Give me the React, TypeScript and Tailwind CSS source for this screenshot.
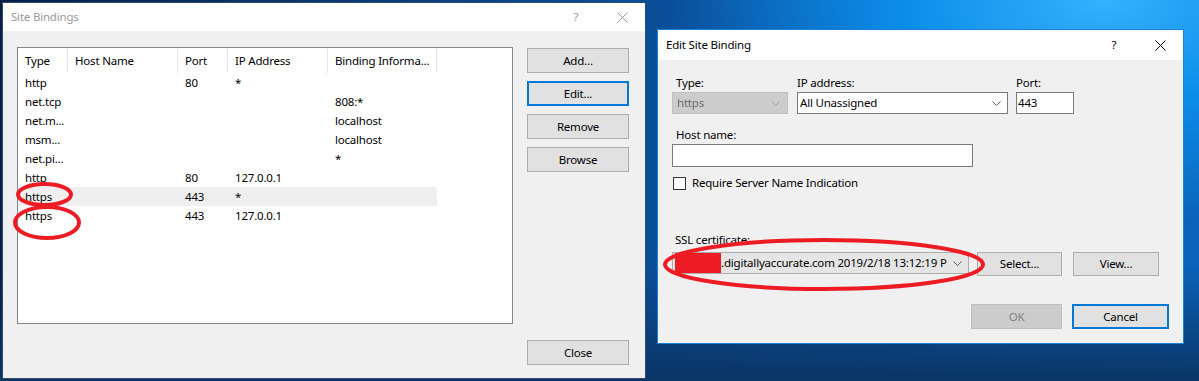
import React from 'react';

type Row = [string, string, string, string, string];

const rows: Row[] = [
    ['http', '', '80', '*', ''],
    ['net.tcp', '', '', '', '808:*'],
    ['net.m...', '', '', '', 'localhost'],
    ['msm...', '', '', '', 'localhost'],
    ['net.pi...', '', '', '', '*'],
    ['http', '', '80', '127.0.0.1', ''],
    ['https', '', '443', '*', ''],
    ['https', '', '443', '127.0.0.1', ''],
];

const columns = ['Type', 'Host Name', 'Port', 'IP Address', 'Binding Informa...'];
const colWidths = ['w-[50px]', 'w-[110px]', 'w-[50px]', 'w-[100px]', 'w-[109px]'];

const Chevron = ({ color }: { color: string }) => (
    <svg width="9" height="5" viewBox="0 0 9 5" fill="none">
        <polyline points="0.5,0.5 4.5,4.5 8.5,0.5" stroke={color} strokeWidth="1" />
    </svg>
);

const CloseGlyph = ({ color }: { color: string }) => (
    <svg width="11" height="11" viewBox="0 0 11 11" fill="none">
        <line x1="0.5" y1="0.5" x2="10.5" y2="10.5" stroke={color} strokeWidth="1" />
        <line x1="10.5" y1="0.5" x2="0.5" y2="10.5" stroke={color} strokeWidth="1" />
    </svg>
);

const TitleBar = ({ title, active, height }: { title: string; active: boolean; height: string }) => (
    <div className={`flex items-center bg-white ${height}`}>
        <span className={`pl-[8px] ${active ? 'text-black' : 'text-[#999999]'}`}>{title}</span>
        <div className="ml-auto flex h-full">
            <div className={`flex w-[46px] items-center justify-center ${active ? 'text-black' : 'text-[#999999]'}`}>?</div>
            <div className="flex w-[46px] items-center justify-center">
                <CloseGlyph color={active ? '#000000' : '#999999'} />
            </div>
        </div>
    </div>
);

const Button = ({
    label,
    width,
    height = 'h-[25px]',
    isDefault,
    disabled,
}: {
    label: string;
    width: string;
    height?: string;
    isDefault?: boolean;
    disabled?: boolean;
}) => {
    const look = disabled
        ? 'border border-[#bfbfbf] bg-[#cccccc] text-[#838383]'
        : isDefault
          ? 'border-2 border-[#0078d7] bg-[#e1e1e1] text-black'
          : 'border border-[#adadad] bg-[#e1e1e1] text-black';
    return <div className={`flex shrink-0 items-center justify-center ${width} ${height} ${look}`}>{label}</div>;
};

const SiteBindings = () => (
    <div className="absolute left-[2px] top-[2px] flex h-[377px] w-[644px] flex-col border border-[#2e4a6e] bg-[#f0f0f0]">
        <TitleBar title="Site Bindings" active={false} height="h-[28px]" />
        <div className="flex flex-col pl-[14px] pr-[16px] pt-[16px]">
            <div className="flex gap-[14px]">
                {/* bindings list */}
                <div className="h-[277px] w-[496px] border border-[#828790] bg-white">
                    <div className="flex h-[25px]">
                        {columns.map((c, i) => (
                            <div
                                key={c}
                                className={`flex items-center whitespace-nowrap border-r border-[#e5e5e5] pl-[7px] ${colWidths[i]}`}
                            >
                                {c}
                            </div>
                        ))}
                    </div>
                    {rows.map((r, idx) => (
                        <div key={idx} className={`flex h-[19px] w-[419px] ${idx === 6 ? 'bg-[#efefef]' : ''}`}>
                            {r.map((cell, i) => (
                                <div key={i} className={`flex items-center whitespace-nowrap pl-[7px] ${colWidths[i]}`}>
                                    {cell}
                                </div>
                            ))}
                        </div>
                    ))}
                </div>
                <div className="flex flex-col gap-[8px] pt-[1px]">
                    <Button label="Add..." width="w-[102px]" />
                    <Button label="Edit..." width="w-[102px]" isDefault />
                    <Button label="Remove" width="w-[102px]" />
                    <Button label="Browse" width="w-[102px]" />
                </div>
            </div>
            <div className="mt-[16px] flex justify-end">
                <Button label="Close" width="w-[102px]" />
            </div>
        </div>
    </div>
);

const EditBinding = () => (
    <div className="absolute left-[657px] top-[29px] flex h-[315px] w-[527px] flex-col border border-[#1883d7] bg-[#f0f0f0]">
        <TitleBar title="Edit Site Binding" active height="h-[30px]" />
        <div className="flex flex-col pl-[14px] pr-[14px] pt-[15px]">
            <div className="flex">
                <div className="flex w-[116px] flex-col">
                    <span className="h-[16px] pl-[4px] leading-[16px]">Type:</span>
                    <div className="mt-[1px] flex h-[22px] items-center border border-[#bfbfbf] bg-[#cccccc] pl-[4px] pr-[7px] text-[#6d6d6d]">
                        https
                        <span className="ml-auto flex">
                            <Chevron color="#a0a0a0" />
                        </span>
                    </div>
                </div>
                <div className="ml-[9px] flex w-[211px] flex-col">
                    <span className="h-[16px] leading-[16px]">IP address:</span>
                    <div className="mt-[1px] flex h-[22px] items-center border border-[#7a7a7a] bg-white pl-[2px] pr-[6px]">
                        All Unassigned
                        <span className="ml-auto flex">
                            <Chevron color="#606060" />
                        </span>
                    </div>
                </div>
                <div className="ml-[8px] flex w-[58px] flex-col">
                    <span className="h-[16px] leading-[16px]">Port:</span>
                    <div className="mt-[1px] flex h-[22px] items-center border border-[#7a7a7a] bg-white pl-[1px]">443</div>
                </div>
            </div>

            <span className="mt-[13px] h-[16px] pl-[4px] leading-[16px]">Host name:</span>
            <div className="mt-[1px] h-[23px] w-[301px] border border-[#7a7a7a] bg-white" />

            <div className="mt-[8px] flex h-[16px] items-center gap-[6px] pl-[1px]">
                <div className="h-[13px] w-[13px] border border-[#333333] bg-white" />
                <span className="leading-[16px]">Require Server Name Indication</span>
            </div>

            <span className="mt-[41px] h-[16px] pl-[3px] leading-[16px]">SSL certificate:</span>
            <div className="mt-[4px] flex items-start">
                <div className="flex h-[22px] w-[297px] items-center border border-[#adadad] bg-[#e5e5e5] pl-[2px]">
                    <div className="h-[20px] w-[46px] shrink-0 bg-[#ed1c24]" />
                    <span className="whitespace-nowrap">.digitallyaccurate.com 2019/2/18 13:12:19 P</span>
                    <span className="ml-auto flex pr-[6px]">
                        <Chevron color="#606060" />
                    </span>
                </div>
                <div className="ml-[8px]">
                    <Button label="Select..." width="w-[85px]" height="h-[24px]" />
                </div>
                <div className="ml-[11px]">
                    <Button label="View..." width="w-[86px]" height="h-[24px]" />
                </div>
            </div>

            <div className="mt-[28px] flex justify-end gap-[10px]">
                <Button label="OK" width="w-[91px]" disabled />
                <Button label="Cancel" width="w-[97px]" isDefault />
            </div>
        </div>
    </div>
);

export default function App() {
    return (
        <div className="relative h-[381px] w-[1199px] overflow-hidden bg-[image:radial-gradient(ellipse_45%_75%_at_92%_0%,#33b2ff_0%,#0b8ae6_40%,rgba(11,138,230,0)_80%),linear-gradient(180deg,rgba(10,53,102,0)_70%,#0a3566_100%),linear-gradient(90deg,#081f45_0%,#0b4c95_50%,#0b62b8_100%)] font-['Noto_Sans',sans-serif] text-[11.5px] tracking-[-0.2px] text-black">
            <SiteBindings />
            <EditBinding />

            {/* red annotation marks */}
            <svg className="pointer-events-none absolute left-0 top-0" width="1199" height="381" fill="none">
                <ellipse cx="44.5" cy="194.5" rx="26.5" ry="10.5" stroke="#ed1c24" strokeWidth="4" />
                <ellipse cx="47" cy="222.5" rx="32" ry="15.5" stroke="#ed1c24" strokeWidth="4" />
                <ellipse cx="824" cy="264.5" rx="159" ry="24.5" stroke="#ed1c24" strokeWidth="4" />
            </svg>
        </div>
    );
}
